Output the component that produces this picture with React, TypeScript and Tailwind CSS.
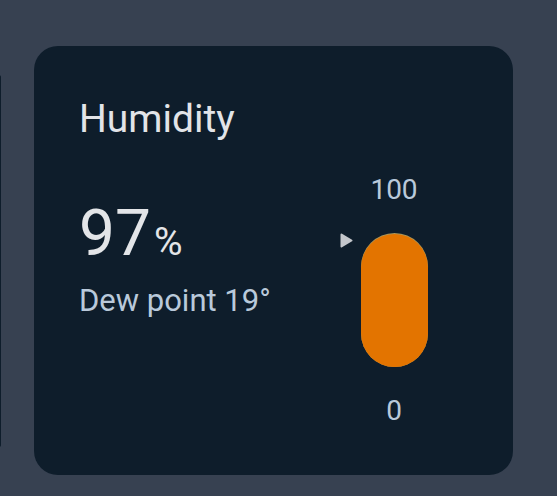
import React from 'react';

const font = { fontFamily: 'Roboto, "Noto Sans", sans-serif' };

// 湿度卡片 - 左侧数值 + 右侧竖向刻度
const HumidityGauge: React.FC<{ value: number }> = ({ value }) => {
  return (
    <div className="flex flex-col items-center w-[110px] mt-[76px]">
      <span className="text-[28px] leading-none text-[#b9c9da]">100</span>
      <div className="relative mt-[29px] w-[67px] h-[134px]">
        {/* 轨道 */}
        <div className="absolute inset-0 rounded-full bg-[#a8955a]" />
        {/* 填充 */}
        <div
          className="absolute left-0 right-0 bottom-0 rounded-full bg-[#e37400]"
          style={{ height: `${Math.max(value, 99)}%` }}
        />
        {/* 指示箭头 */}
        <svg
          className="absolute left-[-21px] top-0"
          width="13"
          height="15"
          viewBox="0 0 13 15"
        >
          <path
            d="M1.5 1.5 L11.5 7.5 L1.5 13.5 Z"
            fill="#c4c7cc"
            stroke="#c4c7cc"
            strokeWidth="2"
            strokeLinejoin="round"
          />
        </svg>
      </div>
      <span className="mt-[30px] text-[28px] leading-none text-[#b9c9da]">0</span>
    </div>
  );
};

export default function App() {
  return (
    <div className="w-[557px] h-[496px] bg-[#374151] flex items-center pt-[25px] overflow-hidden" style={font}>
      {/* 左侧相邻卡片的边缘 */}
      <div className="w-[2px] h-[372px] -ml-px bg-[#0e1d2b] rounded-r-[2px]" />
      <div className="ml-[33px] w-[479px] h-[429px] rounded-[24px] bg-[#0e1d2b] flex items-start justify-between pl-[45px] pr-[64px] pt-[54px]">
        <div className="flex flex-col">
          <span className="text-[39px] leading-none text-[#e2e4e8]">Humidity</span>
          <div className="mt-[63px] flex items-baseline">
            <span className="text-[64px] leading-none text-[#e3e5e8]">97</span>
            <span className="ml-[3px] text-[39px] leading-none text-[#e3e5e8]">%</span>
          </div>
          <span className="mt-[19px] text-[31px] leading-none text-[#b9c9da]">Dew point 19°</span>
        </div>
        <HumidityGauge value={97} />
      </div>
    </div>
  );
}
